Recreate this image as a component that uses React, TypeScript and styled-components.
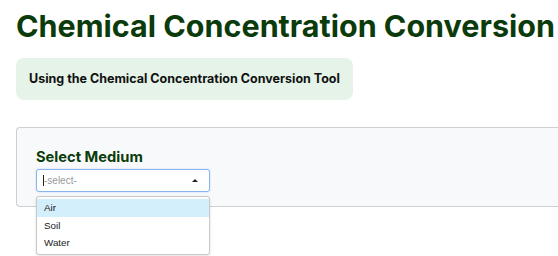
import React, { useState } from "react"
import styled, { createGlobalStyle } from "styled-components"

const GlobalStyle = createGlobalStyle`
    html, body {
        margin: 0;
        background: #fff;
        font-family: Inter, "Noto Sans", sans-serif;
    }
`

const Page = styled.div`
    padding: 8px 0 0 16px;
    width: 620px;
    height: 248px;
    overflow: hidden;
`

const Title = styled.h1`
    margin: 0;
    font-size: 30.5px;
    line-height: 36px;
    font-weight: 700;
    color: #0b3b0b;
    white-space: nowrap;
`

const Callout = styled.div`
    display: inline-block;
    margin-top: 14px;
    background: #e6f3e8;
    border-radius: 8px;
    padding: 13px 13px 14px 13px;
    font-size: 12.5px;
    line-height: 15px;
    font-weight: 700;
    color: #111;
`

const Panel = styled.section`
    margin-top: 27px;
    border: 1px solid #cfcfcf;
    border-right: none;
    border-radius: 4px 0 0 4px;
    background: #f8f9fb;
    padding: 19px 0 13px 19px;
    height: 46px;
`

const Label = styled.div`
    font-size: 14.7px;
    line-height: 20px;
    font-weight: 700;
    color: #0b3b0b;
`

const SelectWrap = styled.div`
    position: relative;
    width: 174px;
    margin-top: 2px;
`

const SelectBox = styled.div`
    box-sizing: border-box;
    height: 23px;
    border: 1px solid #86b7ec;
    border-radius: 3px;
    background: #fff;
    box-shadow: 0 0 2px rgba(80, 150, 230, 0.35);
    display: flex;
    align-items: center;
    padding: 0 11px 0 6px;
    font-family: "Liberation Sans", Arial, sans-serif;
    font-size: 10px;
    color: #9a9a9a;
`

const Cursor = styled.span`
    width: 1px;
    height: 11px;
    background: #222;
`

const Placeholder = styled.span`
    flex: 1;
`

const Caret = styled.span`
    width: 0;
    height: 0;
    margin-top: -1px;
    border-left: 3px solid transparent;
    border-right: 3px solid transparent;
    border-bottom: 3px solid #222;
`

const Menu = styled.ul`
    position: absolute;
    top: 27px;
    left: 0;
    right: 0;
    margin: 0;
    padding: 2px 0;
    list-style: none;
    background: #fff;
    border: 1px solid #c9c9c9;
    border-radius: 3px;
    box-shadow: 0 1px 3px rgba(0, 0, 0, 0.12);
    font-family: "Liberation Sans", Arial, sans-serif;
    font-size: 9.8px;
    color: #222;
    z-index: 2;
`

const Option = styled.li<{ $active?: boolean }>`
    height: 17.6px;
    line-height: 17.6px;
    padding-left: 7px;
    background: ${(p) => (p.$active ? "#d4effc" : "transparent")};
`

const mediums = ["Air", "Soil", "Water"]

export default function App() {
    const [active, setActive] = useState("Air")

    return (
        <Page>
            <GlobalStyle />
            <Title>Chemical Concentration Conversion</Title>
            <Callout>Using the Chemical Concentration Conversion Tool</Callout>
            <Panel>
                <Label>Select Medium</Label>
                <SelectWrap>
                    <SelectBox>
                        <Cursor />
                        <Placeholder>-select-</Placeholder>
                        <Caret />
                    </SelectBox>
                    <Menu>
                        {mediums.map((m) => (
                            <Option key={m} $active={m === active} onMouseEnter={() => setActive(m)}>
                                {m}
                            </Option>
                        ))}
                    </Menu>
                </SelectWrap>
            </Panel>
        </Page>
    )
}
